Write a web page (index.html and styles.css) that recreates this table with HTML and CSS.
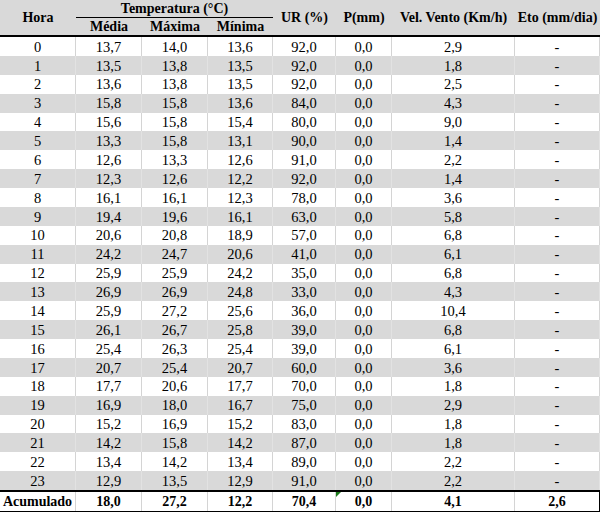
FILE: index.html
```html
<!DOCTYPE html>
<html lang="pt">
<head>
<meta charset="utf-8">
<title>Dados horários</title>
<link rel="stylesheet" href="styles.css">
</head>
<body>
<div class="sheet">
  <div class="head">
    <div class="hc hora">Hora</div>
    <div class="hc temp">Temperatura (°C)</div>
    <div class="hc ur">UR (%)</div>
    <div class="hc p">P(mm)</div>
    <div class="hc vel">Vel. Vento (Km/h)</div>
    <div class="hc eto">Eto (mm/dia)</div>
    <div class="hc sub med">Média</div>
    <div class="hc sub max">Máxima</div>
    <div class="hc sub min">Mínima</div>
  </div>
  <div class="body">
    <div class="row"><span>0</span><span>13,7</span><span>14,0</span><span>13,6</span><span>92,0</span><span>0,0</span><span>2,9</span><span>-</span></div>
    <div class="row"><span>1</span><span>13,5</span><span>13,8</span><span>13,5</span><span>92,0</span><span>0,0</span><span>1,8</span><span>-</span></div>
    <div class="row"><span>2</span><span>13,6</span><span>13,8</span><span>13,5</span><span>92,0</span><span>0,0</span><span>2,5</span><span>-</span></div>
    <div class="row"><span>3</span><span>15,8</span><span>15,8</span><span>13,6</span><span>84,0</span><span>0,0</span><span>4,3</span><span>-</span></div>
    <div class="row"><span>4</span><span>15,6</span><span>15,8</span><span>15,4</span><span>80,0</span><span>0,0</span><span>9,0</span><span>-</span></div>
    <div class="row"><span>5</span><span>13,3</span><span>15,8</span><span>13,1</span><span>90,0</span><span>0,0</span><span>1,4</span><span>-</span></div>
    <div class="row"><span>6</span><span>12,6</span><span>13,3</span><span>12,6</span><span>91,0</span><span>0,0</span><span>2,2</span><span>-</span></div>
    <div class="row"><span>7</span><span>12,3</span><span>12,6</span><span>12,2</span><span>92,0</span><span>0,0</span><span>1,4</span><span>-</span></div>
    <div class="row"><span>8</span><span>16,1</span><span>16,1</span><span>12,3</span><span>78,0</span><span>0,0</span><span>3,6</span><span>-</span></div>
    <div class="row"><span>9</span><span>19,4</span><span>19,6</span><span>16,1</span><span>63,0</span><span>0,0</span><span>5,8</span><span>-</span></div>
    <div class="row"><span>10</span><span>20,6</span><span>20,8</span><span>18,9</span><span>57,0</span><span>0,0</span><span>6,8</span><span>-</span></div>
    <div class="row"><span>11</span><span>24,2</span><span>24,7</span><span>20,6</span><span>41,0</span><span>0,0</span><span>6,1</span><span>-</span></div>
    <div class="row"><span>12</span><span>25,9</span><span>25,9</span><span>24,2</span><span>35,0</span><span>0,0</span><span>6,8</span><span>-</span></div>
    <div class="row"><span>13</span><span>26,9</span><span>26,9</span><span>24,8</span><span>33,0</span><span>0,0</span><span>4,3</span><span>-</span></div>
    <div class="row"><span>14</span><span>25,9</span><span>27,2</span><span>25,6</span><span>36,0</span><span>0,0</span><span>10,4</span><span>-</span></div>
    <div class="row"><span>15</span><span>26,1</span><span>26,7</span><span>25,8</span><span>39,0</span><span>0,0</span><span>6,8</span><span>-</span></div>
    <div class="row"><span>16</span><span>25,4</span><span>26,3</span><span>25,4</span><span>39,0</span><span>0,0</span><span>6,1</span><span>-</span></div>
    <div class="row"><span>17</span><span>20,7</span><span>25,4</span><span>20,7</span><span>60,0</span><span>0,0</span><span>3,6</span><span>-</span></div>
    <div class="row"><span>18</span><span>17,7</span><span>20,6</span><span>17,7</span><span>70,0</span><span>0,0</span><span>1,8</span><span>-</span></div>
    <div class="row"><span>19</span><span>16,9</span><span>18,0</span><span>16,7</span><span>75,0</span><span>0,0</span><span>2,9</span><span>-</span></div>
    <div class="row"><span>20</span><span>15,2</span><span>16,9</span><span>15,2</span><span>83,0</span><span>0,0</span><span>1,8</span><span>-</span></div>
    <div class="row"><span>21</span><span>14,2</span><span>15,8</span><span>14,2</span><span>87,0</span><span>0,0</span><span>1,8</span><span>-</span></div>
    <div class="row"><span>22</span><span>13,4</span><span>14,2</span><span>13,4</span><span>89,0</span><span>0,0</span><span>2,2</span><span>-</span></div>
    <div class="row"><span>23</span><span>12,9</span><span>13,5</span><span>12,9</span><span>91,0</span><span>0,0</span><span>2,2</span><span>-</span></div>
  </div>
  <div class="row total"><span>Acumulado</span><span>18,0</span><span>27,2</span><span>12,2</span><span>70,4</span><span class="flag">0,0</span><span>4,1</span><span>2,6</span></div>
</div>
</body>
</html>
```

FILE: styles.css
```css
html, body {
  margin: 0;
  padding: 0;
  background: #ffffff;
}

.sheet {
  width: 600px;
  font-family: "Liberation Serif", "Times New Roman", serif;
  font-size: 14px;
  color: #000000;
}

.head {
  display: grid;
  grid-template-columns: 76px 66px 66px 65px 63px 56px 123px 85px;
  grid-template-rows: 18px 17px;
  background: #d9d9d9;
  border-bottom: 2px solid #000000;
  font-weight: bold;
}

.hc {
  display: flex;
  align-items: center;
  justify-content: center;
  white-space: nowrap;
  line-height: 1;
}

.hora { grid-column: 1; grid-row: 1 / 3; padding-top: 1px; }
.temp {
  grid-column: 2 / 5;
  grid-row: 1;
  border-bottom: 1px solid #000000;
  padding-top: 1px;
  box-sizing: border-box;
}
.ur { grid-column: 5; grid-row: 1 / 3; }
.p { grid-column: 6; grid-row: 1 / 3; }
.vel { grid-column: 7; grid-row: 1 / 3; }
.eto { grid-column: 8; grid-row: 1 / 3; }
.sub { grid-row: 2; padding-top: 1px; }
.med { grid-column: 2; }
.max { grid-column: 3; }
.min { grid-column: 4; }

.row {
  display: grid;
  grid-template-columns: 76px 66px 66px 65px 63px 56px 123px 85px;
  height: 18.875px;
  background: #ffffff;
  font-size: 14.5px;
}

.body .row:nth-child(even) {
  background: #d9d9d9;
}

.row span {
  display: flex;
  align-items: center;
  justify-content: center;
  border-right: 1px solid #d4d4d4;
  line-height: 1;
  padding-top: 1px;
  white-space: nowrap;
}

.body .row:nth-child(even) span {
  border-right-color: #e2e2e2;
}

.total {
  height: 19px;
  border-top: 2px solid #000000;
  border-bottom: 1px solid #000000;
  font-weight: bold;
  font-size: 14px;
  box-sizing: content-box;
}

.total span:first-child {
  border-left: 1px solid #000000;
  margin-left: -1px;
}

.total span:last-child {
  border-right-color: #000000;
}

.flag {
  position: relative;
}

.flag::before {
  content: "";
  position: absolute;
  top: 0;
  left: 0;
  border-top: 5px solid #1a7a1a;
  border-right: 5px solid transparent;
}
```
